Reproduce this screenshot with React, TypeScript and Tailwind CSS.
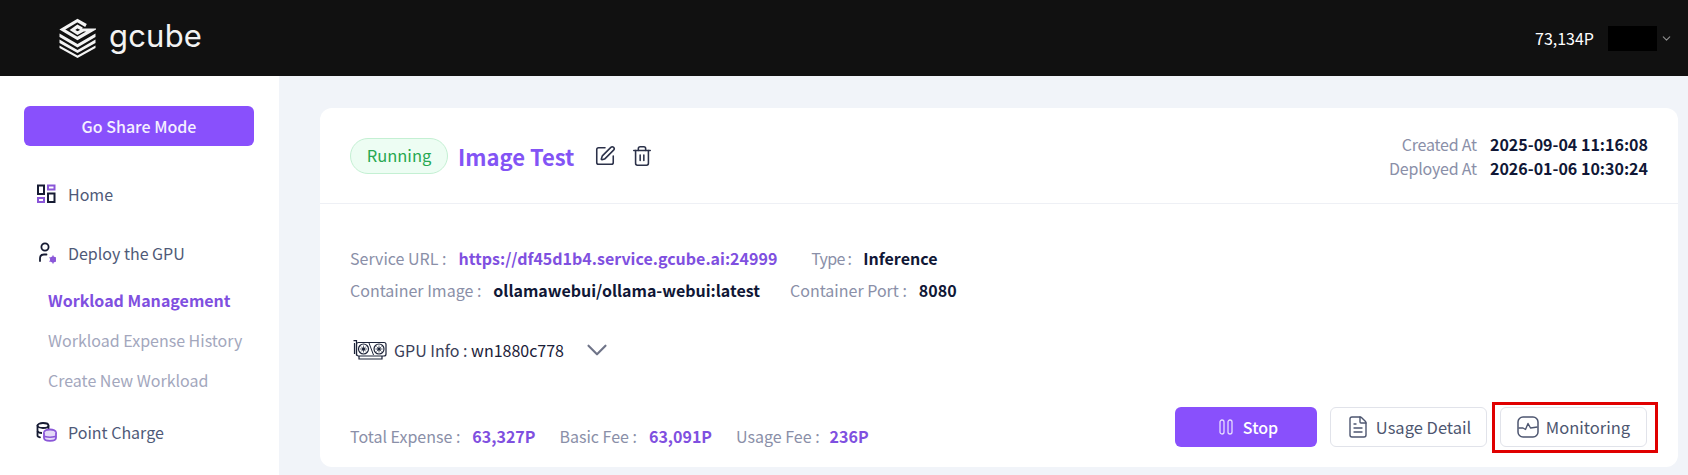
import React from "react";
import { ChevronDown, SquarePen, Trash2, FileText } from "lucide-react";

function Logo() {
  return (
    <svg width="37" height="40" viewBox="0 0 37 40" fill="none" className="shrink-0">
      <path d="M27 7.500 L18.500 2.500 L3.500 11.500 L18.500 20.500 L33 12 L24 12 L18.500 15.200 L13.500 12 L18.500 8.500 L23 11" stroke="#f3f3f3" strokeWidth="3.200" fill="none" strokeLinejoin="miter" />
      <path d="M0.500 15.500 L0.500 19 L18.500 29.500 L36.500 19 L36.500 15.500 L18.500 26 Z" fill="#f3f3f3" />
      <path d="M0.500 21.500 L0.500 25 L18.500 35 L36.500 25 L36.500 21.500 L18.500 32 Z" fill="#f3f3f3" />
      <path d="M0.500 27.500 L0.500 30 L18.500 40 L36.500 30 L36.500 27.500 L18.500 37.500 Z" fill="#f3f3f3" />
    </svg>
  );
}

function HomeIcon() {
  return (
    <svg width="20" height="20" viewBox="0 0 20 20" fill="none">
      <rect x="2" y="1.500" width="6" height="8.500" stroke="#161b33" strokeWidth="2" />
      <rect x="12" y="1.500" width="6.500" height="4" stroke="#8a56d8" strokeWidth="2" />
      <rect x="2" y="14" width="6" height="4" stroke="#8a56d8" strokeWidth="2" />
      <rect x="12" y="9.500" width="6.500" height="8.500" stroke="#161b33" strokeWidth="2" />
    </svg>
  );
}

function DeployIcon() {
  return (
    <svg width="20" height="22" viewBox="0 0 20 22" fill="none">
      <circle cx="9" cy="5" r="3.600" stroke="#161b33" strokeWidth="1.800" />
      <path d="M4 19 L4 16.500 C4 14 5.500 12.500 8 12.500 L10.500 12.500" stroke="#161b33" strokeWidth="1.800" strokeLinecap="round" />
      <circle cx="17" cy="17.500" r="2" stroke="#8a56d8" strokeWidth="2" />
      <path d="M17 13.500 V21.500 M13.500 15.500 L20.500 19.500 M20.500 15.500 L13.500 19.500" stroke="#8a56d8" strokeWidth="1.300" />
    </svg>
  );
}

function PointIcon() {
  return (
    <svg width="22" height="20" viewBox="0 0 22 20" fill="none">
      <ellipse cx="7" cy="3.500" rx="5.500" ry="2.500" stroke="#161b33" strokeWidth="1.800" />
      <path d="M1.500 3.500 V13.500 C1.500 14.500 2.500 15 4 15.300 M12.500 4 V8" stroke="#161b33" strokeWidth="1.800" strokeLinecap="round" />
      <path d="M1.500 9 C2 10.500 4.500 11 6 11" stroke="#161b33" strokeWidth="1.800" />
      <ellipse cx="14" cy="10.500" rx="6" ry="3" fill="#e4d9f7" stroke="#8a56d8" strokeWidth="1.800" />
      <path d="M8 10.500 V16 C8 17.700 11 18.800 14 18.800 C17 18.800 20 17.700 20 16 V10.500" fill="#e4d9f7" stroke="#8a56d8" strokeWidth="1.800" />
      <path d="M8 14 C9 15.500 19 15.500 20 14" stroke="#8a56d8" strokeWidth="1.500" />
    </svg>
  );
}

function GpuIcon() {
  return (
    <svg width="34" height="20" viewBox="0 0 34 20" fill="none" className="shrink-0">
      <path d="M0.500 0.700 H3.500 V15.500 M1.500 3 V14" stroke="#1b2238" strokeWidth="1.200" />
      <rect x="3.500" y="2.500" width="29.500" height="13.500" rx="2" stroke="#1b2238" strokeWidth="1.200" />
      <circle cx="10.500" cy="9" r="5" stroke="#1b2238" strokeWidth="1.200" />
      <circle cx="10.500" cy="9" r="1.600" fill="#1b2238" />
      <path d="M10.500 5.500V12.500M7 9H14M8 6.500L13 11.500M13 6.500L8 11.500" stroke="#1b2238" strokeWidth="0.700" />
      <circle cx="26" cy="9" r="5" stroke="#1b2238" strokeWidth="1.200" />
      <circle cx="26" cy="9" r="1.600" fill="#1b2238" />
      <path d="M26 5.500V12.500M22.500 9H29.500M23.500 6.500L28.500 11.500M28.500 6.500L23.500 11.500" stroke="#1b2238" strokeWidth="0.700" />
      <path d="M16 3 L20.500 15" stroke="#1b2238" strokeWidth="1" />
      <path d="M6 16 V19 H29 V16" stroke="#1b2238" strokeWidth="1.200" />
    </svg>
  );
}

function PauseIcon() {
  return (
    <svg width="14" height="16" viewBox="0 0 14 16" fill="none">
      <rect x="1" y="1" width="4" height="14" rx="2" stroke="#e6dcff" strokeWidth="1.300" />
      <rect x="9" y="1" width="4" height="14" rx="2" stroke="#e6dcff" strokeWidth="1.300" />
    </svg>
  );
}

function MonitorIcon() {
  return (
    <svg width="22" height="22" viewBox="0 0 22 22" fill="none">
      <rect x="1" y="1" width="20" height="20" rx="5" stroke="#4d5670" strokeWidth="1.500" />
      <path d="M1.500 12 H6 L8.500 13.500 L11 7.500 L13.500 12 L20.500 11" stroke="#4d5670" strokeWidth="1.400" strokeLinejoin="round" />
    </svg>
  );
}

function Label({ children, className = "" }: { children: React.ReactNode; className?: string }) {
  return <span className={"text-[#8a8fa8] " + className}>{children}</span>;
}

export default function App() {
  return (
    <div className="w-[1688px] h-[475px] overflow-hidden flex flex-col bg-[#f1f4f9] font-['Noto_Sans_CJK_KR','Noto_Sans',sans-serif] text-[16px]">
      <header className="h-[76px] shrink-0 bg-[#111111] flex items-center">
        <div className="ml-[59px] flex items-center gap-[13px]">
          <Logo />
          <span className="font-['Inter',sans-serif] text-[31px] leading-none font-normal tracking-[0.2px] text-[#f3f3f3] pb-[5px]">gcube</span>
        </div>
        <div className="ml-auto flex items-center mr-[15px]">
          <span className="text-white text-[16px] leading-[22px]">73,134P</span>
          <div className="w-[49px] h-[25px] bg-black ml-[14px]" />
          <ChevronDown size={13} className="text-[#8f8f8f] ml-[3px]" />
        </div>
      </header>

      <div className="flex flex-1 min-h-0">
        <aside className="w-[279px] shrink-0 bg-white pt-[30px] px-[24px]">
          <button className="w-[230px] h-[40px] rounded-[6px] bg-[#8950fc] text-[#f5f0ff] text-[16px] font-medium leading-none">
            Go Share Mode
          </button>
          <nav className="mt-[38px] flex flex-col">
            <div className="h-[20px] pl-[12px] flex items-center gap-[12px] text-[#4f5a78]">
              <HomeIcon /><span>Home</span>
            </div>
            <div className="mt-[39px] h-[20px] pl-[12px] flex items-center gap-[12px] text-[#4f5a78]">
              <DeployIcon /><span>Deploy the GPU</span>
            </div>
            <div className="mt-[27px] flex flex-col gap-[20px] pl-[24px] leading-[20px] text-[#a3a7bd]">
              <span className="font-bold text-[#7f50e0]">Workload Management</span>
              <span>Workload Expense History</span>
              <span>Create New Workload</span>
            </div>
            <div className="mt-[32px] h-[20px] pl-[12px] flex items-center gap-[10px] text-[#4f5a78]">
              <PointIcon /><span>Point Charge</span>
            </div>
          </nav>
        </aside>

        <main className="flex-1 min-w-0 pt-[32px] pl-[41px] pr-[10px]">
          <section className="h-[359px] bg-white rounded-[12px] flex flex-col">
            <div className="h-[96px] shrink-0 border-b border-[#eef0f5] pl-[30px] pr-[30px] flex items-center">
              <span className="w-[98px] h-[36px] rounded-full border border-[#c4f0d3] bg-[#edfdf3] text-[#27a851] text-[16.500px] flex items-center justify-center leading-none">Running</span>
              <span className="ml-[10px] text-[#8354f5] text-[22px] font-semibold leading-none">Image Test</span>
              <SquarePen size={22} strokeWidth={1.700} className="ml-[20px] text-[#2b3149]" />
              <Trash2 size={22} strokeWidth={1.700} className="ml-[15px] text-[#2b3149]" />
              <div className="ml-auto grid grid-cols-[auto_auto] gap-x-[13px] leading-[24px] text-right">
                <Label className="tracking-[-0.2px]">Created At</Label>
                <span className="font-bold text-[#101736]">2025-09-04 11:16:08</span>
                <Label className="tracking-[-0.2px]">Deployed At</Label>
                <span className="font-bold text-[#101736]">2026-01-06 10:30:24</span>
              </div>
            </div>

            <div className="pl-[30px] pt-[43px] flex flex-col gap-[10px] leading-[22px]">
              <div className="flex items-center">
                <Label>Service URL :</Label>
                <span className="ml-[12px] font-bold text-[#7f50e0]">https://df45d1b4.service.gcube.ai:24999</span>
                <Label className="ml-[34px] tracking-[-0.7px]">Type :</Label>
                <span className="ml-[12px] font-bold text-[#101736]">Inference</span>
              </div>
              <div className="flex items-center">
                <Label>Container Image :</Label>
                <span className="ml-[12px] font-bold text-[#101736]">ollamawebui/ollama-webui:latest</span>
                <Label className="ml-[30px]">Container Port :</Label>
                <span className="ml-[12px] font-bold text-[#101736]">8080</span>
              </div>
            </div>

            <div className="pl-[33px] mt-[37px] flex items-center h-[24px] leading-[22px] text-[#1a2038]">
              <GpuIcon />
              <span className="ml-[7px]"><span className="text-[#3a4058]">GPU Info : </span>wn1880c778</span>
              <ChevronDown size={34} strokeWidth={1.500} className="ml-[16px] -my-[5px] text-[#6f7488]" />
            </div>

            <div className="mt-auto mb-[20px] pl-[30px] pr-[31px] flex items-end">
              <div className="flex items-center leading-[22px]">
                <Label>Total Expense :</Label>
                <span className="ml-[12px] font-bold text-[#7f50e0]">63,327P</span>
                <Label className="ml-[24px]">Basic Fee :</Label>
                <span className="ml-[12px] font-bold text-[#7f50e0]">63,091P</span>
                <Label className="ml-[24px]">Usage Fee :</Label>
                <span className="ml-[10px] font-bold text-[#7f50e0]">236P</span>
              </div>
              <div className="ml-auto flex items-center gap-[13px]">
                <button className="w-[142px] h-[40px] pl-[5px] rounded-[6px] bg-[#8950fc] text-white text-[16px] font-medium flex items-center justify-center gap-[10px] leading-none">
                  <PauseIcon />Stop
                </button>
                <button className="w-[157px] h-[40px] rounded-[6px] border border-[#e1e3ea] bg-white text-[#4d5670] text-[16.500px] flex items-center justify-center gap-[6px] leading-none">
                  <FileText size={24} strokeWidth={1.400} />Usage Detail
                </button>
                <button className="relative w-[147px] h-[40px] rounded-[6px] border border-[#e1e3ea] bg-white text-[#4d5670] text-[16.500px] flex items-center justify-center gap-[7px] leading-none">
                  <MonitorIcon />Monitoring
                  <span className="absolute -left-[9px] -right-[12px] -top-[6px] -bottom-[7px] border-[3px] border-[#e00000]" />
                </button>
              </div>
            </div>
          </section>
        </main>
      </div>
    </div>
  );
}
